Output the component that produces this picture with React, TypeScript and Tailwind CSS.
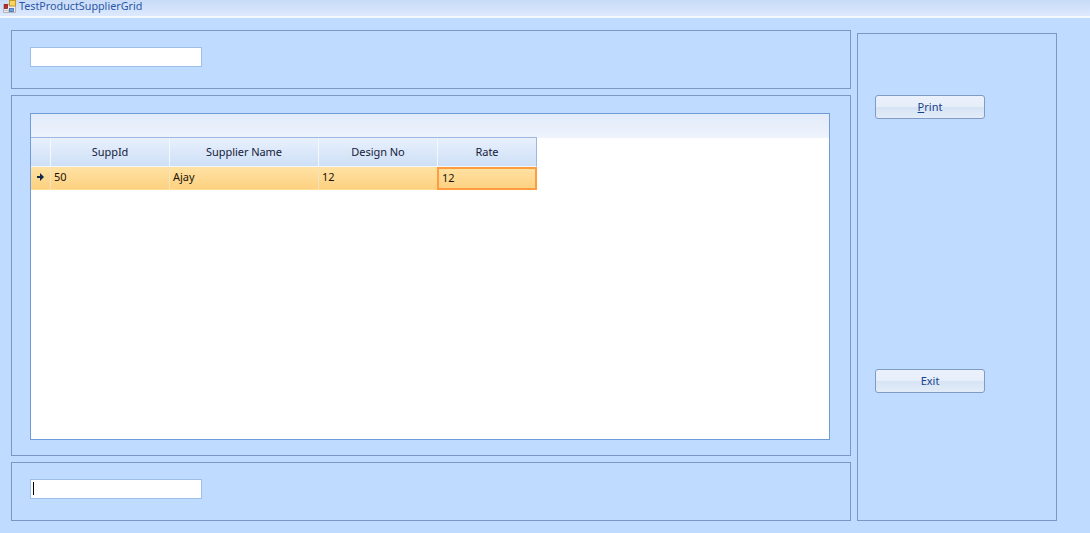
const font = "font-['Noto_Sans',sans-serif]";

const TitleIcon = () => (
  <svg width="16" height="16" viewBox="0 0 16 16" className="shrink-0">
    <path d="M2.5 6.5h12v8h-12z" fill="#eceef2" stroke="#b4b4b4" />
    <path d="M7.5 11.5v3M2.5 12.5h6" stroke="#c4c4c4" fill="none" />
    <rect x="3.5" y="6.5" width="3" height="4" fill="#c4262e" stroke="#8e1c1c" strokeWidth="0.8" />
    <rect x="8.5" y="2.5" width="6" height="5.5" fill="#fbd45c" stroke="#c6972c" />
    <rect x="8.5" y="10.5" width="4" height="3" fill="#6a9fe4" stroke="#3e6cb0" strokeWidth="0.8" />
  </svg>
);

const TextBox = ({ caret }: { caret?: boolean }) => (
  <div className="w-[172px] h-5 bg-white border border-[#9ebfe8] flex items-center pl-[2px]">
    {caret && <div className="w-px h-[13px] bg-black" />}
  </div>
);

const Panel = ({ className, children }: { className: string; children?: React.ReactNode }) => (
  <div className={`border border-[#7a97c5] ${className}`}>{children}</div>
);

const Button = ({ children }: { children: React.ReactNode }) => (
  <button className="w-[110px] h-6 rounded-[3px] border border-[#7f9bc6] bg-[linear-gradient(#ebf1fb_0%,#e6eefa_48%,#d6e3f4_50%,#e3ecf8_100%)] text-[11px] text-[#15428b] flex items-center justify-center">
    {children}
  </button>
);

const headers = [
  { label: "SuppId", w: "w-[119px]" },
  { label: "Supplier Name", w: "w-[149px]" },
  { label: "Design No", w: "w-[119px]" },
  { label: "Rate", w: "w-[99px]" },
];

const cells = [
  { label: "50", w: "w-[119px]" },
  { label: "Ajay", w: "w-[149px]" },
  { label: "12", w: "w-[119px]" },
];

const Grid = () => (
  <div className="w-[800px] h-[327px] ml-[18px] mt-[17px] bg-white border border-[#6f9bd8]">
    <div className="h-[23px] bg-[linear-gradient(#e2ebfb,#eef3fc)]" />
    <div className="h-px bg-[linear-gradient(to_right,#9db8de_506px,#eef3fc_506px)]" />
    <div className="flex h-[29px] w-[506px] bg-[linear-gradient(#e8f0fd,#cddff6)] text-[#15213a] tracking-[-0.05px]">
      <div className="w-5 border-r border-[#f4f8fd] border-b border-b-[#f4f8fd]" />
      {headers.map((h) => (
        <div
          key={h.label}
          className={`${h.w} flex items-center justify-center border-r last:border-r-[#9db8de] border-[#f4f8fd] border-b border-b-[#f4f8fd]`}
        >
          {h.label}
        </div>
      ))}
    </div>
    <div className="flex h-[23px] w-[506px] bg-[linear-gradient(#ffe2a3,#fdd07f)] text-[#1a1408]">
      <div className="w-5 border-r border-[#f1e3bd] flex items-center justify-center pb-[2px] border-b border-b-[#ffdc90]">
        <svg width="7" height="8" viewBox="0 0 7 8">
          <path d="M0 3h3V0l4 4-4 4V5H0z" fill="#13284f" />
        </svg>
      </div>
      {cells.map((c) => (
        <div
          key={c.label}
          className={`${c.w} border-r border-[#f1e3bd] pl-[3px] pb-[2px] flex items-center border-b border-b-[#ffdc90]`}
        >
          {c.label}
        </div>
      ))}
      <div className="w-[100px] -ml-px border-2 border-[#ff9c3f] pl-[3px] pb-[1px] flex items-center">12</div>
    </div>
  </div>
);

export default function App() {
  return (
    <div className={`w-[1090px] h-[533px] overflow-hidden bg-[#bfdbff] text-[11px] ${font}`}>
      <div className="h-[18px] flex items-center gap-[2px] pl-[1px] pb-[4px] bg-[linear-gradient(#c8dbf7,#dde9fe)] border-b-2 border-[#f4f8fe] text-[10.75px] text-[#2a56a8]">
        <TitleIcon />
        <span>TestProductSupplierGrid</span>
      </div>
      <div className="flex gap-[6px] pl-[11px] pt-3">
        <div className="w-[840px] flex flex-col gap-[6px]">
          <Panel className="h-[59px] flex items-center pl-[18px] pb-[6px]">
            <TextBox />
          </Panel>
          <Panel className="h-[361px]">
            <Grid />
          </Panel>
          <Panel className="h-[59px] flex items-center pl-[18px] pb-[6px]">
            <TextBox caret />
          </Panel>
        </div>
        <Panel className="w-[200px] h-[488px] mt-[3px] pl-[17px] pt-[61px] flex flex-col gap-[250px]">
          <Button>
            <span>
              <span className="underline">P</span>rint
            </span>
          </Button>
          <Button>Exit</Button>
        </Panel>
      </div>
    </div>
  );
}
